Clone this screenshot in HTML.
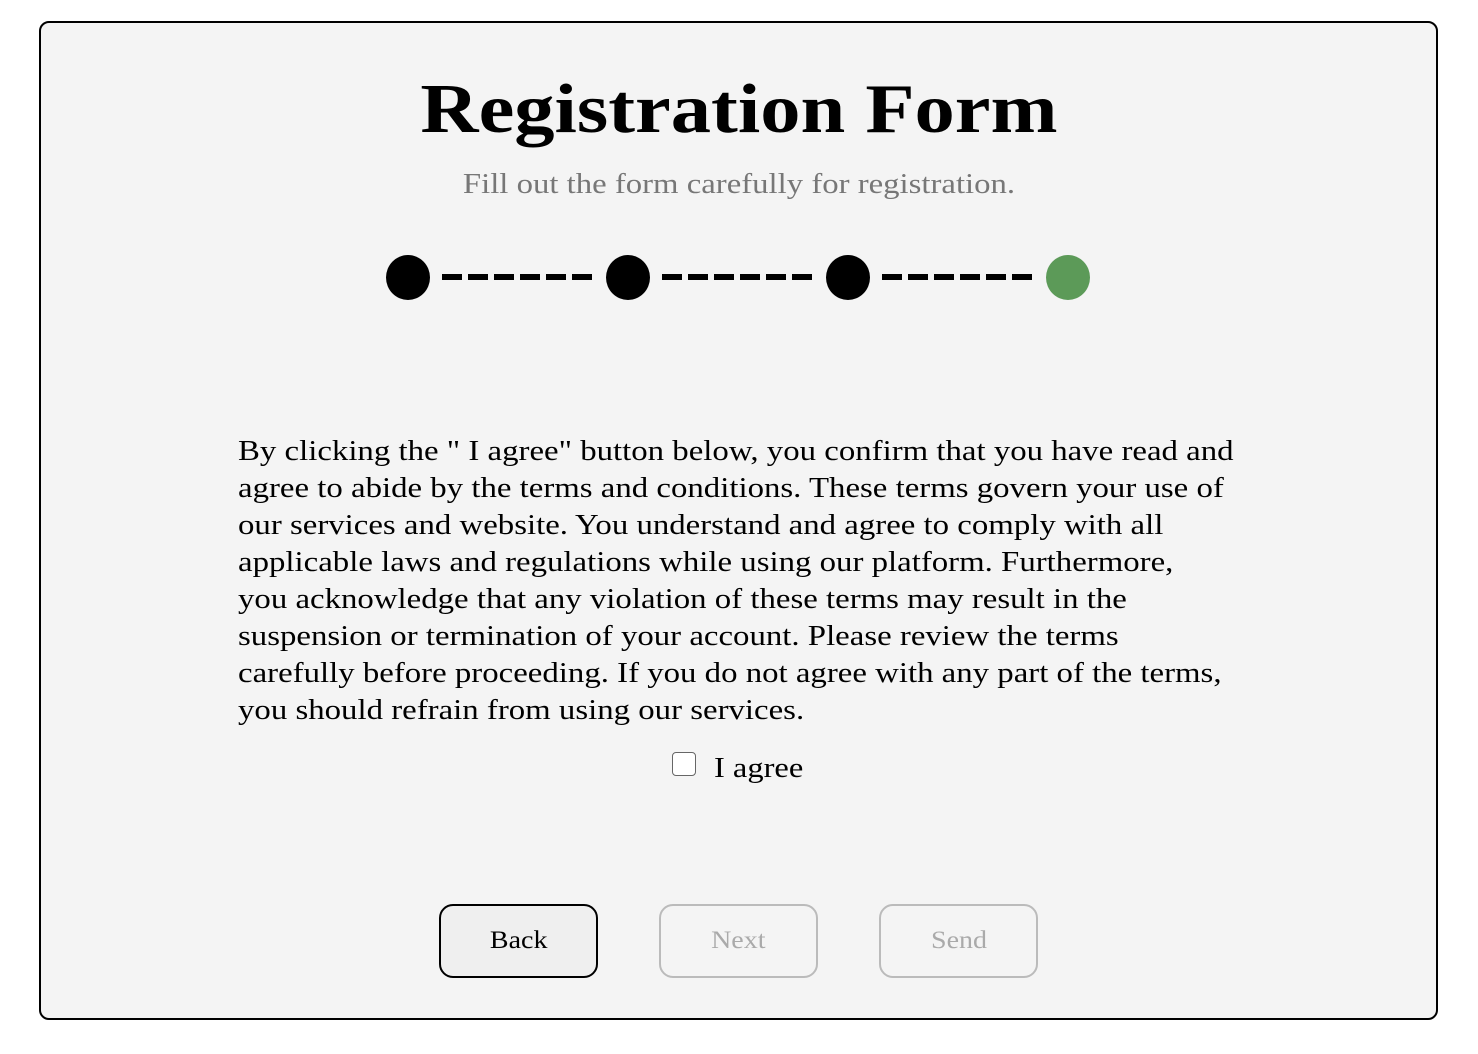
<!DOCTYPE html>
<html><head><meta charset="utf-8"><style>
html,body{margin:0;padding:0;background:#fff;width:1478px;height:1054px;overflow:hidden;font-family:"Liberation Serif",serif;}
.card{position:absolute;left:39px;top:21px;width:1395px;height:995px;border:2px solid #000;border-radius:10px;background:#f4f4f4;}
h1{position:absolute;left:0;right:0;top:68px;margin:0;text-align:center;font-size:70px;font-weight:bold;line-height:84px;color:#000;transform:scaleX(1.15);}
.sub{position:absolute;left:0;right:0;top:167px;text-align:center;font-size:28px;color:#777;line-height:36px;transform:scaleX(1.17);}
.dot{position:absolute;top:255px;width:44px;height:45px;border-radius:50%;background:#000;}
.dash{position:absolute;top:274px;width:20px;height:6px;background:#000;}
.txt{position:absolute;left:238px;top:433px;font-size:29px;line-height:37px;color:#000;white-space:nowrap;transform:scaleX(1.132);transform-origin:0 0;}
.cb{position:absolute;left:672px;top:752px;width:22px;height:22px;border:1.5px solid #666;border-radius:4px;background:#fff;}
.ag{position:absolute;left:714px;top:750px;font-size:29px;line-height:36px;transform:scaleX(1.12);transform-origin:0 0;}
.btn{position:absolute;top:904px;width:155px;height:70px;border-radius:14px;text-align:center;line-height:70px;font-size:25px;}
.btn span{display:inline-block;transform:scaleX(1.12);}
</style></head><body>
<div class="card"></div>
<h1>Registration Form</h1>
<div class="sub">Fill out the form carefully for registration.</div>
<div class="dot" style="left:386px"></div>
<div class="dot" style="left:606px"></div>
<div class="dot" style="left:826px"></div>
<div class="dot" style="left:1046px;background:#5c9a58"></div>
<div class="dash" style="left:442px"></div><div class="dash" style="left:468px"></div><div class="dash" style="left:494px"></div><div class="dash" style="left:520px"></div><div class="dash" style="left:546px"></div><div class="dash" style="left:572px"></div>
<div class="dash" style="left:662px"></div><div class="dash" style="left:688px"></div><div class="dash" style="left:714px"></div><div class="dash" style="left:740px"></div><div class="dash" style="left:766px"></div><div class="dash" style="left:792px"></div>
<div class="dash" style="left:882px"></div><div class="dash" style="left:908px"></div><div class="dash" style="left:934px"></div><div class="dash" style="left:960px"></div><div class="dash" style="left:986px"></div><div class="dash" style="left:1012px"></div>
<div class="txt">By clicking the " I agree" button below, you confirm that you have read and<br>agree to abide by the terms and conditions. These terms govern your use of<br>our services and website. You understand and agree to comply with all<br>applicable laws and regulations while using our platform. Furthermore,<br>you acknowledge that any violation of these terms may result in the<br>suspension or termination of your account. Please review the terms<br>carefully before proceeding. If you do not agree with any part of the terms,<br>you should refrain from using our services.</div>
<div class="cb"></div>
<div class="ag">I agree</div>
<div class="btn" style="left:439px;border:2px solid #000;background:#efefef;color:#000"><span>Back</span></div>
<div class="btn" style="left:659px;border:2px solid #bbb;color:#aaa"><span>Next</span></div>
<div class="btn" style="left:879px;border:2px solid #bbb;color:#aaa"><span>Send</span></div>
</body></html>
